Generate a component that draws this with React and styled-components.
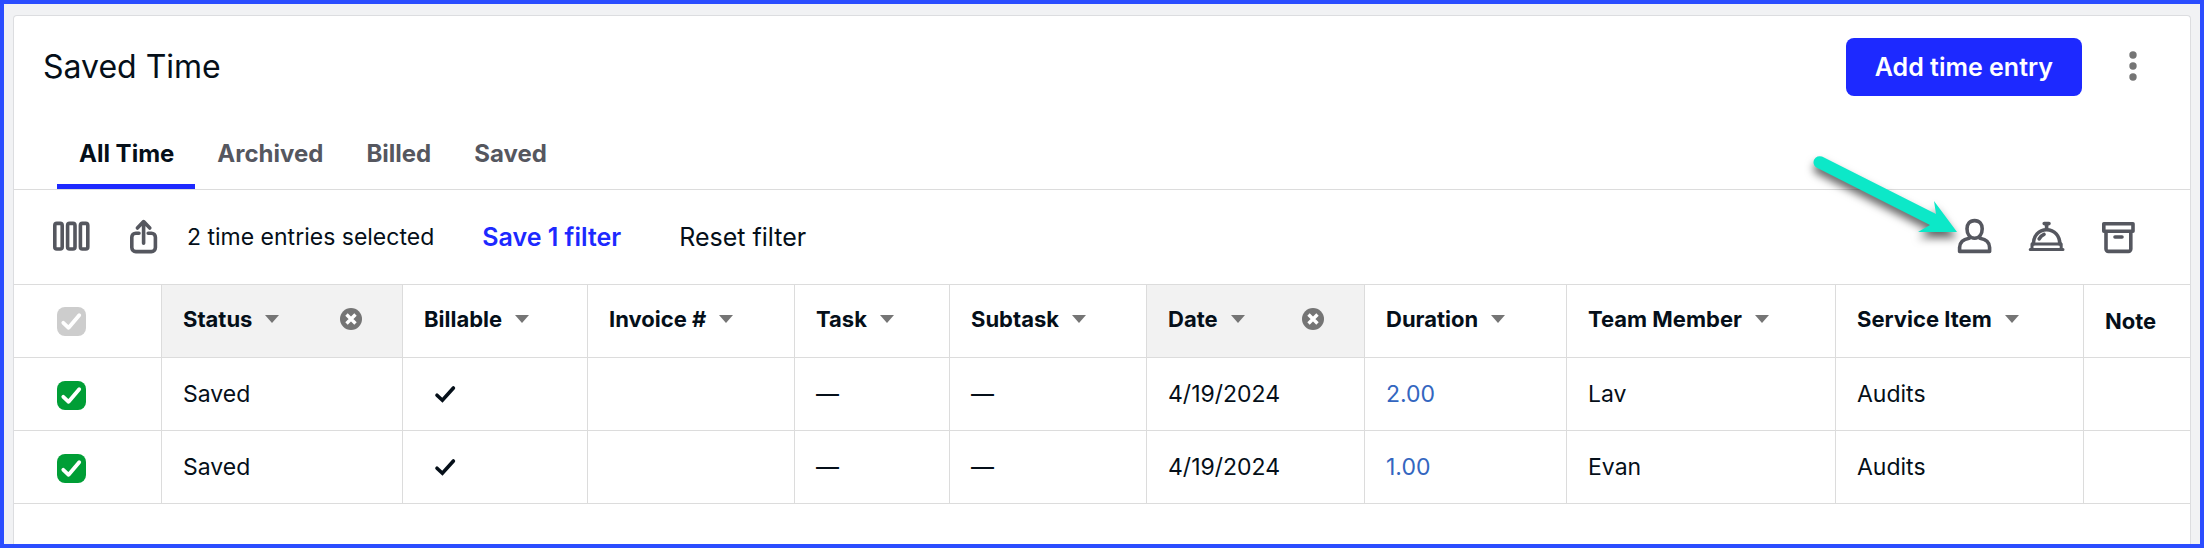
import React, { useState } from 'react'
import styled, { createGlobalStyle } from 'styled-components'

const GlobalStyle = createGlobalStyle`
    * {
        box-sizing: border-box;
    }
    body {
        margin: 0;
        color: #050f19;
        font-family: Inter, "Liberation Sans", sans-serif;
        font-size: 23px;
        line-height: 32px;
    }
    button {
        padding: 0;
        border: none;
        background-color: transparent;
        color: inherit;
        font: inherit;
        cursor: pointer;
    }
    svg {
        display: block;
    }
`

const Page = styled.main`
    display: flex;
    min-height: 100vh;
    padding: 11px 9px 0;
    border: 4px solid #2b4dff;
    background-color: #f1f2f4;
`

const Card = styled.section`
    flex: 1;
    min-width: 0;
    border: 1px solid #dcdde0;
    border-bottom: none;
    border-radius: 4px 4px 0 0;
    background-color: #fff;
`

const Header = styled.header`
    display: flex;
    align-items: center;
    padding: 22px 40px 25px 29px;
`

const Title = styled.h1`
    flex: 1;
    margin: 0;
    font-size: 32px;
    font-weight: 400;
    line-height: 40px;
`

const PrimaryButton = styled.button`
    height: 58px;
    padding: 0 29px;
    border-radius: 8px;
    background-color: #1d29ff;
    color: #fff;
    font-size: 25px;
    font-weight: 600;
`

const MenuButton = styled.button`
    margin-left: 34px;
`

const Tabs = styled.div`
    display: flex;
    padding: 0 43px;
    border-bottom: 1px solid #dcdcdc;
`

const Tab = styled.button`
    padding: 17px 21px 14px 22px;
    border-bottom: 5px solid ${({ $active }) => ($active ? '#1d29ff' : 'transparent')};
    color: ${({ $active }) => ($active ? '#050f19' : '#55575f')};
    font-size: 24px;
    font-weight: 700;
`

const Toolbar = styled.div`
    display: flex;
    align-items: center;
    justify-content: space-between;
    padding: 27px 52px 27px 37px;
    border-bottom: 1px solid #dcdcdc;
`

const ToolbarGroup = styled.div`
    position: relative;
    display: flex;
    align-items: center;
    gap: 32px;
    color: #55575f;
`

const IconButton = styled.button`
    width: 40px;
    height: 40px;
`

const Filters = styled.div`
    display: flex;
    gap: 48px;
    margin-left: -8px;
    color: #050f19;
`

const SaveFilter = styled.button`
    color: #1d29ff;
    font-size: 25px;
    font-weight: 600;
`

const ResetFilter = styled.button`
    margin-left: 10px;
    font-size: 25px;
`

const Pointer = styled.svg`
    position: absolute;
    right: 181px;
    bottom: 23px;
    overflow: visible;
    pointer-events: none;
    filter: drop-shadow(0 6px 4px rgba(0, 0, 0, 0.6));
`

const TableWrap = styled.div`
    overflow-x: auto;
`

const Table = styled.table`
    width: 100%;
    table-layout: fixed;
    border-spacing: 0;
`

const Col = styled.col`
    width: ${({ $width }) => ($width ? `${$width}px` : 'auto')};
`

const Th = styled.th`
    height: 73px;
    padding: 0 40px 4px 21px;
    border-right: 1px solid #dcdcdc;
    border-bottom: 1px solid #dcdcdc;
    background-color: ${({ $filtered }) => ($filtered ? '#f2f2f2' : 'transparent')};
    font-size: 22px;
    font-weight: 700;
    text-align: left;
    white-space: nowrap;
    &:last-child {
        border-right: none;
        padding: 0 0 0 21px;
    }
`

const Td = styled.td`
    height: 73px;
    padding: 0 21px;
    border-right: 1px solid #dcdcdc;
    border-bottom: 1px solid #dcdcdc;
    &:last-child {
        border-right: none;
    }
`

const CheckTh = styled(Th)`
    padding: 1px 43px 0;
`

const CheckTd = styled(Td)`
    padding: 3px 43px 0;
`

const HeadCell = styled.div`
    display: flex;
    align-items: center;
`

const SortButton = styled.button`
    display: flex;
    align-items: center;
    gap: 13px;
`

const ClearButton = styled.button`
    margin-left: auto;
`

const DurationLink = styled.a`
    color: #3366c0;
    text-decoration: none;
`

const Billable = styled.span`
    display: block;
    padding-left: 10px;
`

const CheckBox = styled.label`
    display: grid;
    width: 29px;
    height: 29px;
    > * {
        grid-area: 1 / 1;
    }
    input {
        appearance: none;
        width: 29px;
        height: 29px;
        margin: 0;
        border: 2px solid #ccc;
        border-radius: 8px;
    }
    input:checked {
        border: none;
        background-color: #009e36;
    }
    input:disabled {
        background-color: #cdcdcd;
    }
    svg {
        pointer-events: none;
    }
`

const Check = ({ label, ...props }) => (
    <CheckBox>
        <input type="checkbox" aria-label={label} {...props} />
        <svg width="29" height="29" viewBox="0 0 29 29" fill="none" stroke="#fff" strokeWidth="3.8" strokeLinecap="round" strokeLinejoin="round">
            <path d="M6.3 15.8 11.6 20.8 22.2 8.2" />
        </svg>
    </CheckBox>
)

const Icon = ({ children }) => (
    <svg width="40" height="40" viewBox="0 0 40 40" fill="none" stroke="currentColor" strokeWidth="3.6" strokeLinecap="round" strokeLinejoin="round">
        {children}
    </svg>
)

const ColumnsIcon = () => (
    <Icon>
        <rect x="3.8" y="6.4" width="7.4" height="25.6" rx="2" />
        <rect x="16.6" y="6.4" width="7.4" height="25.6" rx="2" />
        <rect x="29.4" y="6.4" width="7.4" height="25.6" rx="2" />
    </Icon>
)

const ShareIcon = () => (
    <Icon>
        <path d="M16 16.2h-3.2a4 4 0 0 0-4 4v10.4a4 4 0 0 0 4 4h15.6a4 4 0 0 0 4-4V20.2a4 4 0 0 0-4-4h-3.2M20.6 26.2V5M14.4 11 20.6 4.6 26.8 11" />
    </Icon>
)

const PersonIcon = () => (
    <Icon>
        <path d="M20.6 3.6c-5 0-7.6 3.4-7.6 8.2 0 5.2 2.8 9.4 7.6 9.4s7.6-4.2 7.6-9.4c0-4.8-2.6-8.2-7.6-8.2Z" />
        <path d="M15.2 21.2C9.2 22.2 5.6 25.4 5.6 30.6V34.4H35.6V30.6C35.6 25.4 32 22.2 26 21.2" />
    </Icon>
)

const BellIcon = () => (
    <Icon>
        <path d="M18.2 6.6h4.8M20.6 7v5" />
        <path d="M7.4 27C7.4 19 12.6 12.8 20.6 12.8S33.8 19 33.8 27M13.2 21.8C14.4 19.6 15.8 18.4 18 17.4" />
        <path d="M6.2 27h28.8M6 27v5M35.2 27v5M4.2 32.6h32.8" strokeWidth="3" />
    </Icon>
)

const ArchiveIcon = () => (
    <Icon>
        <path d="M5.8 6.8h29.2v7.4H5.8Z" />
        <path d="M8 14.8V32a2.4 2.4 0 0 0 2.4 2.4h20a2.4 2.4 0 0 0 2.4-2.4V14.8M17 20h7" />
    </Icon>
)

const Caret = () => (
    <svg width="14" height="8" viewBox="0 0 14 8">
        <path d="M0 0h14L7 8Z" fill="#757575" />
    </svg>
)

const ClearIcon = () => (
    <svg width="22" height="22" viewBox="0 0 22 22">
        <circle cx="11" cy="11" r="11" fill="#757575" />
        <path d="M6.5 6.5l9 9M15.5 6.5l-9 9" stroke="#fff" strokeWidth="3.4" />
    </svg>
)

const columns = [
    { name: 'Status', width: 241, filtered: true },
    { name: 'Billable', width: 185 },
    { name: 'Invoice #', width: 207 },
    { name: 'Task', width: 155 },
    { name: 'Subtask', width: 197 },
    { name: 'Date', width: 218, filtered: true },
    { name: 'Duration', width: 202 },
    { name: 'Team Member', width: 269 },
    { name: 'Service Item', width: 248 },
]

const entries = [
    { id: 1, status: 'Saved', date: '4/19/2024', duration: '2.00', member: 'Lav', item: 'Audits' },
    { id: 2, status: 'Saved', date: '4/19/2024', duration: '1.00', member: 'Evan', item: 'Audits' },
]

const tabs = ['All Time', 'Archived', 'Billed', 'Saved']

const App = () => {

    const [activeTab, setActiveTab] = useState('All Time');
    const [selected, setSelected] = useState([1, 2]);

    const toggle = (id) => {
        setSelected(selected.includes(id) ? selected.filter(el => el !== id) : [...selected, id])
    }

    return (
        <>
            <GlobalStyle />
            <Page>
                <Card>
                    <Header>
                        <Title>Saved Time</Title>
                        <PrimaryButton>Add time entry</PrimaryButton>
                        <MenuButton aria-label="More options">
                            <svg width="34" height="40" viewBox="0 0 34 40" fill="#757575">
                                <circle cx="17" cy="8" r="3.7" />
                                <circle cx="17" cy="19" r="3.7" />
                                <circle cx="17" cy="30" r="3.7" />
                            </svg>
                        </MenuButton>
                    </Header>
                    <Tabs role="tablist">
                        {tabs.map(tab => (
                            <Tab key={tab} role="tab" aria-selected={tab === activeTab} $active={tab === activeTab} onClick={() => setActiveTab(tab)}>
                                {tab}
                            </Tab>
                        ))}
                    </Tabs>
                    <Toolbar>
                        <ToolbarGroup>
                            <IconButton aria-label="Columns"><ColumnsIcon /></IconButton>
                            <IconButton aria-label="Export"><ShareIcon /></IconButton>
                            <Filters>
                                <span>{selected.length} time entries selected</span>
                                <SaveFilter>Save 1 filter</SaveFilter>
                                <ResetFilter>Reset filter</ResetFilter>
                            </Filters>
                        </ToolbarGroup>
                        <ToolbarGroup>
                            <IconButton aria-label="Assign team member"><PersonIcon /></IconButton>
                            <IconButton aria-label="Assign service item"><BellIcon /></IconButton>
                            <IconButton aria-label="Archive"><ArchiveIcon /></IconButton>
                            <Pointer width="144" height="78" viewBox="0 0 144 78" fill="#0ce8c8">
                                <path d="M9 .6 123 58 121 45 144 76H105L117 69 3.4 11.6A6.2 6.2 0 0 1 9 .6Z" />
                            </Pointer>
                        </ToolbarGroup>
                    </Toolbar>
                    <TableWrap>
                        <Table>
                            <colgroup>
                                <Col $width={148} />
                                {columns.map(col => <Col key={col.name} $width={col.width} />)}
                                <Col />
                            </colgroup>
                            <thead>
                                <tr>
                                    <CheckTh><Check label="Select all" checked disabled readOnly /></CheckTh>
                                    {columns.map(col => (
                                        <Th key={col.name} $filtered={col.filtered}>
                                            <HeadCell>
                                                <SortButton>{col.name}<Caret /></SortButton>
                                                {col.filtered && <ClearButton aria-label={`Clear ${col.name} filter`}><ClearIcon /></ClearButton>}
                                            </HeadCell>
                                        </Th>
                                    ))}
                                    <Th>Note</Th>
                                </tr>
                            </thead>
                            <tbody>
                                {entries.map(entry => (
                                    <tr key={entry.id}>
                                        <CheckTd>
                                            <Check label={`Select ${entry.member}`} checked={selected.includes(entry.id)} onChange={() => toggle(entry.id)} />
                                        </CheckTd>
                                        <Td>{entry.status}</Td>
                                        <Td>
                                            <Billable>
                                                <svg width="22" height="18" viewBox="0 0 22 18" fill="none" stroke="#050f19" strokeWidth="3.6" strokeLinecap="round">
                                                    <path d="M3 10.2 8.4 15.2 19.4 3" />
                                                </svg>
                                            </Billable>
                                        </Td>
                                        <Td />
                                        <Td>—</Td>
                                        <Td>—</Td>
                                        <Td>{entry.date}</Td>
                                        <Td><DurationLink href="#">{entry.duration}</DurationLink></Td>
                                        <Td>{entry.member}</Td>
                                        <Td>{entry.item}</Td>
                                        <Td />
                                    </tr>
                                ))}
                            </tbody>
                        </Table>
                    </TableWrap>
                </Card>
            </Page>
        </>
    )
}

export default App
